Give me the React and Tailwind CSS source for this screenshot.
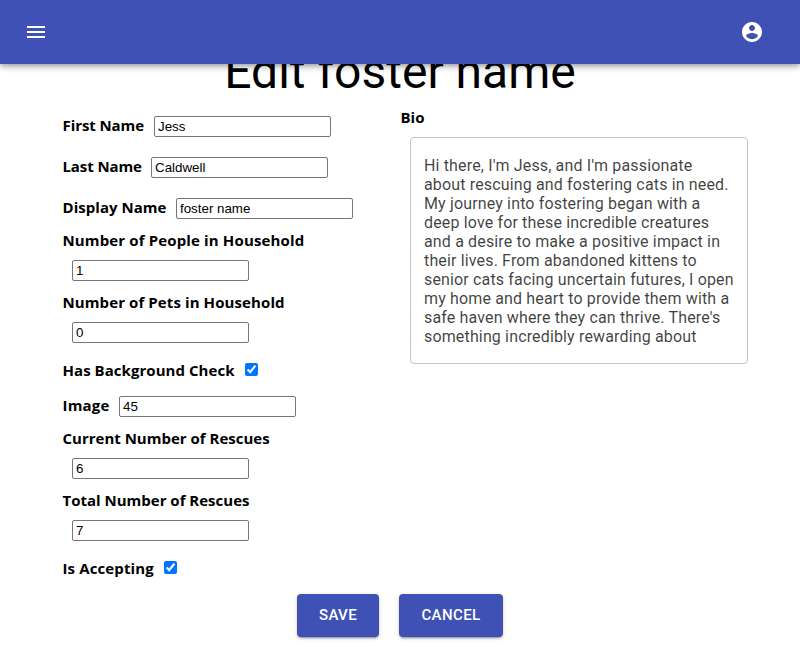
import React from "react";

function Label({ children, className = "" }) {
  return (
    <label className={`block shrink-0 h-5 font-['Open_Sans','Noto_Sans',sans-serif] font-bold text-[15px] leading-[20px] text-black whitespace-nowrap ${className}`}>
      {children}
    </label>
  );
}

function Field({ value }) {
  return (
    <input
      defaultValue={value}
      className="block shrink-0 w-[177px] h-[21px] border border-[#767676] rounded-[2px] bg-white px-[3px] py-0 font-['Liberation_Sans',Arial,sans-serif] text-[13.333px] text-black outline-none"
    />
  );
}

function Check() {
  return <input type="checkbox" defaultChecked className="block w-[13px] h-[13px] m-0" />;
}

function Row({ children, className = "" }) {
  return <div className={`flex items-center h-[21px] ${className}`}>{children}</div>;
}

function Button({ children, className = "" }) {
  return (
    <button className={`flex items-center justify-center h-[43px] rounded-[4px] bg-[#3f51b5] text-white text-[15px] font-medium tracking-[0.4px] shadow-[0px_3px_1px_-2px_rgba(0,0,0,0.2),0px_2px_2px_0px_rgba(0,0,0,0.14),0px_1px_5px_0px_rgba(0,0,0,0.12)] ${className}`}>
      {children}
    </button>
  );
}

const bio = [
  "Hi there, I'm Jess, and I'm passionate",
  "about rescuing and fostering cats in need.",
  "My journey into fostering began with a",
  "deep love for these incredible creatures",
  "and a desire to make a positive impact in",
  "their lives. From abandoned kittens to",
  "senior cats facing uncertain futures, I open",
  "my home and heart to provide them with a",
  "safe haven where they can thrive. There's",
  "something incredibly rewarding about",
];

export default function App() {
  return (
    <div className="h-[647px] w-[800px] overflow-hidden bg-white font-[Roboto,sans-serif] flex flex-col">
      <header className="relative z-10 h-16 shrink-0 bg-[#3f51b5] flex items-center justify-between pl-6 pr-9 text-white shadow-[0px_2px_4px_-1px_rgba(0,0,0,0.2),0px_4px_5px_0px_rgba(0,0,0,0.14),0px_1px_10px_0px_rgba(0,0,0,0.12)]">
        <svg width="24" height="24" viewBox="0 0 24 24" fill="currentColor"><path d="M3 18h18v-2H3v2zm0-5h18v-2H3v2zm0-7v2h18V6H3z" /></svg>
        <svg width="24" height="24" viewBox="0 0 24 24" fill="currentColor"><path d="M12 2C6.48 2 2 6.48 2 12s4.48 10 10 10 10-4.480 10-10S17.520 2 12 2zm0 3c1.660 0 3 1.340 3 3s-1.340 3-3 3-3-1.340-3-3 1.340-3 3-3zm0 14.200c-2.500 0-4.710-1.280-6-3.220.03-1.990 4-3.080 6-3.080 1.990 0 5.970 1.090 6 3.080-1.290 1.940-3.500 3.220-6 3.220z" /></svg>
      </header>
      <h1 className="-mt-[20px] h-[56px] shrink-0 text-center text-[48px] leading-[56px] font-normal text-black">Edit foster name</h1>

      <main className="flex h-[494px] shrink-0">
        <section className="w-[400px] shrink-0 pl-[62.500px] pt-4">
          <Row><Label className="mb-[3px] w-[91.500px] tracking-[-0.08px]">First Name</Label><Field value="Jess" /></Row>
          <Row className="mt-5"><Label className="mb-[3px] w-[88.500px] tracking-[-0.1px]">Last Name</Label><Field value="Caldwell" /></Row>
          <Row className="mt-5"><Label className="mb-[3px] w-[113.500px] tracking-[0.04px]">Display Name</Label><Field value="foster name" /></Row>
          <Label className="mt-[11px] tracking-[0.14px]">Number of People in Household</Label>
          <Row className="mt-[10px] pl-[9.500px]"><Field value="1" /></Row>
          <Label className="mt-[11px] tracking-[0.1px]">Number of Pets in Household</Label>
          <Row className="mt-[10px] pl-[9.500px]"><Field value="0" /></Row>
          <Row className="mt-4"><Label className="mt-[1px] w-[182.500px] tracking-[0.05px]">Has Background Check</Label><Check /></Row>
          <Row className="mt-4"><Label className="mb-[3px] w-[56.500px] tracking-[0.2px]">Image</Label><Field value="45" /></Row>
          <Label className="mt-[11px]">Current Number of Rescues</Label>
          <Row className="mt-[10px] pl-[9.500px]"><Field value="6" /></Row>
          <Label className="mt-[11px]">Total Number of Rescues</Label>
          <Row className="mt-[10px] pl-[9.500px]"><Field value="7" /></Row>
          <Row className="mt-4"><Label className="mt-[1px] w-[101.500px] tracking-[0.12px]">Is Accepting</Label><Check /></Row>
        </section>
        <section className="w-[400px] pl-[0.500px] pt-[7px]">
          <Label>Bio</Label>
          <div className="mt-[10px] ml-[9.500px] w-[338px] h-[227px] rounded-[4px] border border-[#c4c4c4] px-[13px] pt-[18px] text-[16px] leading-[19px] tracking-[0.150px] text-[rgba(0,0,0,0.75)]">
            {bio.map((line) => (
              <p key={line} className="whitespace-nowrap">{line}</p>
            ))}
          </div>
        </section>
      </main>
      <div className="flex justify-center gap-5 shrink-0">
        <Button className="w-[82px]">SAVE</Button>
        <Button className="w-[104px]">CANCEL</Button>
      </div>
    </div>
  );
}
